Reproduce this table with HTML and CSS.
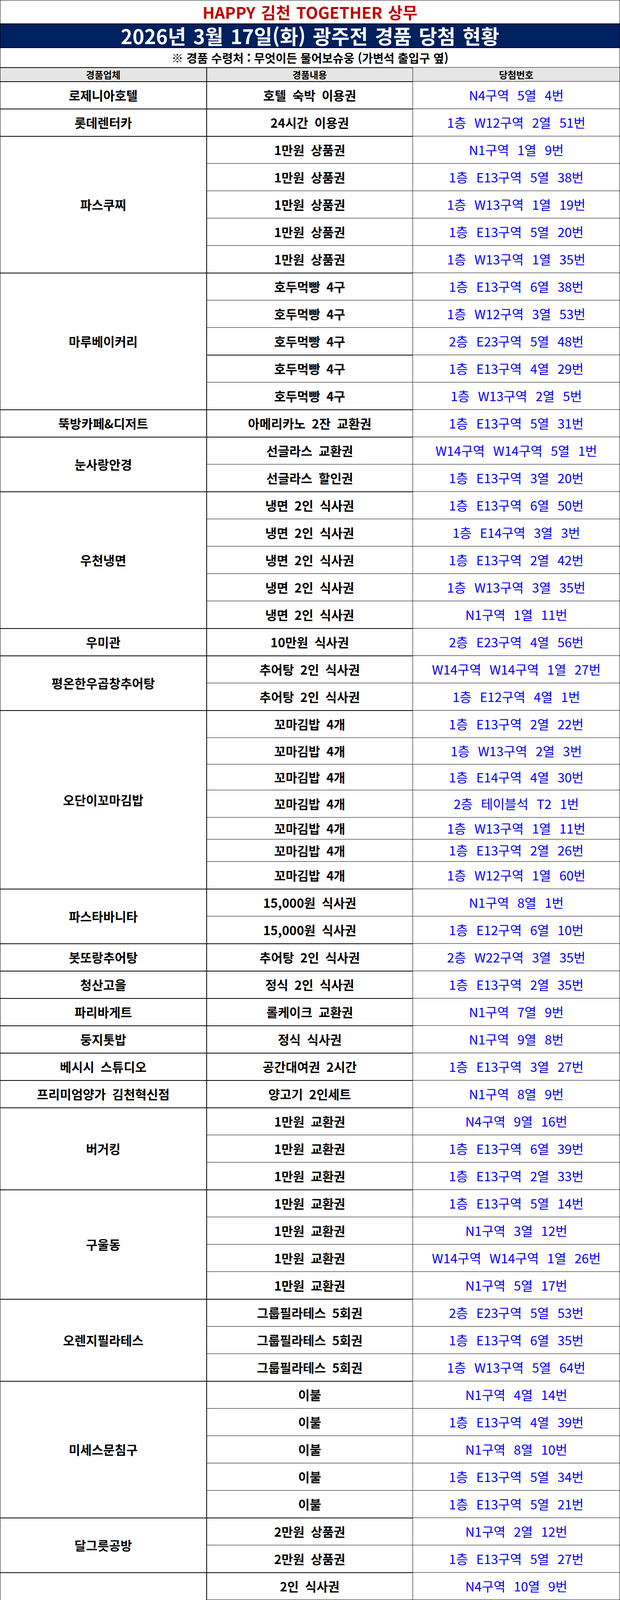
FILE: index.html
```html
<!DOCTYPE html>
<html lang="ko">
<head>
<meta charset="utf-8">
<title>HAPPY 김천 TOGETHER 상무 - 경품 당첨 현황</title>
<link rel="stylesheet" href="styles.css">
</head>
<body>
<table class="sheet">
<colgroup><col class="c1"><col class="c2"><col class="c3"></colgroup>
<tbody>
<tr class="r-title"><td class="t-title" colspan="3">HAPPY 김천 TOGETHER 상무</td></tr>
<tr class="r-band"><td class="t-band" colspan="3">2026년 3월 17일(화) 광주전 경품 당첨 현황</td></tr>
<tr class="r-sub"><td class="t-sub" colspan="3">※ 경품 수령처 : 무엇이든 물어보슈웅 (가변석 출입구 옆)</td></tr>
<tr class="r-head"><th class="h thick">경품업체</th><th class="h thick">경품내용</th><th class="h">당첨번호</th></tr>

<tr class="r"><td class="v">로제니아호텔</td><td class="p gt gb">호텔 숙박 이용권</td><td class="n">N4구역 5열 4번</td></tr>
<tr class="r"><td class="v">롯데렌터카</td><td class="p gt gb">24시간 이용권</td><td class="n">1층 W12구역 2열 51번</td></tr>

<tr class="r"><td class="v" rowspan="5">파스쿠찌</td><td class="p gt">1만원 상품권</td><td class="n">N1구역 1열 9번</td></tr>
<tr class="r"><td class="p">1만원 상품권</td><td class="n">1층 E13구역 5열 38번</td></tr>
<tr class="r"><td class="p">1만원 상품권</td><td class="n">1층 W13구역 1열 19번</td></tr>
<tr class="r"><td class="p">1만원 상품권</td><td class="n">1층 E13구역 5열 20번</td></tr>
<tr class="r"><td class="p gb">1만원 상품권</td><td class="n">1층 W13구역 1열 35번</td></tr>

<tr class="r"><td class="v" rowspan="5">마루베이커리</td><td class="p gt">호두먹빵 4구</td><td class="n">1층 E13구역 6열 38번</td></tr>
<tr class="r"><td class="p">호두먹빵 4구</td><td class="n">1층 W12구역 3열 53번</td></tr>
<tr class="r"><td class="p">호두먹빵 4구</td><td class="n">2층 E23구역 5열 48번</td></tr>
<tr class="r"><td class="p gt">호두먹빵 4구</td><td class="n">1층 E13구역 4열 29번</td></tr>
<tr class="r"><td class="p gb">호두먹빵 4구</td><td class="n">1층 W13구역 2열 5번</td></tr>

<tr class="r"><td class="v">뚝방카페&amp;디저트</td><td class="p gt gb">아메리카노 2잔 교환권</td><td class="n">1층 E13구역 5열 31번</td></tr>

<tr class="r"><td class="v" rowspan="2">눈사랑안경</td><td class="p gt">선글라스 교환권</td><td class="n">W14구역 W14구역 5열 1번</td></tr>
<tr class="r"><td class="p gb">선글라스 할인권</td><td class="n">1층 E13구역 3열 20번</td></tr>

<tr class="r"><td class="v" rowspan="5">우천냉면</td><td class="p gt">냉면 2인 식사권</td><td class="n">1층 E13구역 6열 50번</td></tr>
<tr class="r"><td class="p">냉면 2인 식사권</td><td class="n">1층 E14구역 3열 3번</td></tr>
<tr class="r"><td class="p">냉면 2인 식사권</td><td class="n">1층 E13구역 2열 42번</td></tr>
<tr class="r"><td class="p">냉면 2인 식사권</td><td class="n">1층 W13구역 3열 35번</td></tr>
<tr class="r"><td class="p gb">냉면 2인 식사권</td><td class="n">N1구역 1열 11번</td></tr>

<tr class="r"><td class="v">우미관</td><td class="p gt gb">10만원 식사권</td><td class="n">2층 E23구역 4열 56번</td></tr>

<tr class="r"><td class="v" rowspan="2">평온한우곱창추어탕</td><td class="p gt">추어탕 2인 식사권</td><td class="n">W14구역 W14구역 1열 27번</td></tr>
<tr class="r"><td class="p gb">추어탕 2인 식사권</td><td class="n">1층 E12구역 4열 1번</td></tr>

<tr class="r"><td class="v" rowspan="7">오단이꼬마김밥</td><td class="p gt">꼬마김밥 4개</td><td class="n">1층 E13구역 2열 22번</td></tr>
<tr class="r h68"><td class="p">꼬마김밥 4개</td><td class="n">1층 W13구역 2열 3번</td></tr>
<tr class="r h66"><td class="p">꼬마김밥 4개</td><td class="n">1층 E14구역 4열 30번</td></tr>
<tr class="r"><td class="p">꼬마김밥 4개</td><td class="n">2층 테이블석 T2 1번</td></tr>
<tr class="r h56"><td class="p">꼬마김밥 4개</td><td class="n">1층 W13구역 1열 11번</td></tr>
<tr class="r h57"><td class="p">꼬마김밥 4개</td><td class="n">1층 E13구역 2열 26번</td></tr>
<tr class="r"><td class="p gb">꼬마김밥 4개</td><td class="n">1층 W12구역 1열 60번</td></tr>

<tr class="r"><td class="v" rowspan="2">파스타바니타</td><td class="p gt">15,000원 식사권</td><td class="n">N1구역 8열 1번</td></tr>
<tr class="r"><td class="p gb">15,000원 식사권</td><td class="n">1층 E12구역 6열 10번</td></tr>

<tr class="r"><td class="v">봇또랑추어탕</td><td class="p gt gb">추어탕 2인 식사권</td><td class="n">2층 W22구역 3열 35번</td></tr>
<tr class="r"><td class="v">청산고을</td><td class="p gt gb">정식 2인 식사권</td><td class="n">1층 E13구역 2열 35번</td></tr>
<tr class="r"><td class="v">파리바게트</td><td class="p gt gb">롤케이크 교환권</td><td class="n">N1구역 7열 9번</td></tr>
<tr class="r"><td class="v">둥지톳밥</td><td class="p gt gb">정식 식사권</td><td class="n">N1구역 9열 8번</td></tr>
<tr class="r"><td class="v">베시시 스튜디오</td><td class="p gt gb">공간대여권 2시간</td><td class="n">1층 E13구역 3열 27번</td></tr>
<tr class="r"><td class="v">프리미엄양가 김천혁신점</td><td class="p gt gb">양고기 2인세트</td><td class="n">N1구역 8열 9번</td></tr>

<tr class="r"><td class="v" rowspan="3">버거킹</td><td class="p gt">1만원 교환권</td><td class="n">N4구역 9열 16번</td></tr>
<tr class="r"><td class="p">1만원 교환권</td><td class="n">1층 E13구역 6열 39번</td></tr>
<tr class="r"><td class="p gb">1만원 교환권</td><td class="n">1층 E13구역 2열 33번</td></tr>

<tr class="r"><td class="v" rowspan="4">구울동</td><td class="p gt">1만원 교환권</td><td class="n">1층 E13구역 5열 14번</td></tr>
<tr class="r"><td class="p">1만원 교환권</td><td class="n">N1구역 3열 12번</td></tr>
<tr class="r"><td class="p">1만원 교환권</td><td class="n">W14구역 W14구역 1열 26번</td></tr>
<tr class="r"><td class="p gb">1만원 교환권</td><td class="n">N1구역 5열 17번</td></tr>

<tr class="r"><td class="v" rowspan="3">오렌지필라테스</td><td class="p gt">그룹필라테스 5회권</td><td class="n">2층 E23구역 5열 53번</td></tr>
<tr class="r"><td class="p">그룹필라테스 5회권</td><td class="n">1층 E13구역 6열 35번</td></tr>
<tr class="r"><td class="p gb">그룹필라테스 5회권</td><td class="n">1층 W13구역 5열 64번</td></tr>

<tr class="r"><td class="v" rowspan="5">미세스문침구</td><td class="p gt">이불</td><td class="n">N1구역 4열 14번</td></tr>
<tr class="r"><td class="p">이불</td><td class="n">1층 E13구역 4열 39번</td></tr>
<tr class="r"><td class="p">이불</td><td class="n">N1구역 8열 10번</td></tr>
<tr class="r"><td class="p">이불</td><td class="n">1층 E13구역 5열 34번</td></tr>
<tr class="r"><td class="p gb">이불</td><td class="n">1층 E13구역 5열 21번</td></tr>

<tr class="r"><td class="v" rowspan="2">달그릇공방</td><td class="p gt">2만원 상품권</td><td class="n">N1구역 2열 12번</td></tr>
<tr class="r"><td class="p gb">2만원 상품권</td><td class="n">1층 E13구역 5열 27번</td></tr>

<tr class="r"><td class="v" rowspan="5">단밀</td><td class="p gt">2인 식사권</td><td class="n">N4구역 10열 9번</td></tr>
<tr class="r"><td class="p">2인 식사권</td><td class="n">1층 E13구역 5열 19번</td></tr>
<tr class="r"><td class="p">2인 식사권</td><td class="n">N1구역 5열 9번</td></tr>
<tr class="r"><td class="p">2인 식사권</td><td class="n">1층 W13구역 1열 1번</td></tr>
<tr class="r"><td class="p gb">2인 식사권</td><td class="n">3층 E33구역 1열 39번</td></tr>

<tr class="r"><td class="v" rowspan="5">토끼밀</td><td class="p gt">분식대첩 4종</td><td class="n">N1구역 8열 11번</td></tr>
<tr class="r"><td class="p">분식대첩 4종</td><td class="n">1층 E13구역 2열 23번</td></tr>
<tr class="r"><td class="p">분식대첩 4종</td><td class="n">1층 E14구역 3열 4번</td></tr>
<tr class="r"><td class="p">분식대첩 4종</td><td class="n">1층 E13구역 5열 13번</td></tr>
<tr class="r"><td class="p gb">분식대첩 4종</td><td class="n">1층 E13구역 6열 18번</td></tr>

<tr class="r"><td class="v" rowspan="5">파닭회관 본점 매장식사권</td><td class="p gt gb">치킨 한마리</td><td class="n">N1구역 1열 14번</td></tr>
<tr class="r"><td class="p gt gb">치킨 한마리</td><td class="n">1층 W12구역 2열 50번</td></tr>
<tr class="r"><td class="p gt gb">치킨 한마리</td><td class="n">N1구역 3열 9번</td></tr>
<tr class="r"><td class="p gt gb">치킨 한마리</td><td class="n">1층 E13구역 3열 40번</td></tr>
<tr class="r"><td class="p gt gb open-r">치킨 한마리</td><td class="n open">1층 W12구역 1열 41번</td></tr>

<tr class="r"><td class="v" rowspan="3">세탁예술가</td><td class="p gt gb open-r">부활세제 2L</td><td class="n open">1층 E13구역 2열 41번</td></tr>
<tr class="r"><td class="p gt gb open-r">부활세제 2L</td><td class="n open">1층 E13구역 6열 32번</td></tr>
<tr class="r r-last"><td class="p gt open-r last">부활세제 2L</td><td class="n open">N4구역 10열 10번</td></tr>
</tbody>
</table>
</body>
</html>
```

FILE: styles.css
```css
* {
  box-sizing: border-box;
}

html, body {
  margin: 0;
  padding: 0;
  background: #ffffff;
}

body {
  font-family: "Noto Sans CJK KR", "Noto Sans", "Liberation Sans", sans-serif;
  color: #000000;
}

.sheet {
  border-collapse: collapse;
  table-layout: fixed;
  width: 1586px;
}

.c1 { width: 528px; }
.c2 { width: 528px; }
.c3 { width: 530px; }

.sheet td,
.sheet th {
  padding: 0;
  text-align: center;
  vertical-align: middle;
  line-height: 1.15;
  white-space: nowrap;
}

/* row heights */
.r-title { height: 60px; }
.r-band  { height: 61px; }
.r-sub   { height: 51px; }
.r-head  { height: 36px; }
.r       { height: 70px; }
.r.h68   { height: 68px; }
.r.h66   { height: 66px; }
.r.h57   { height: 57px; }
.r.h56   { height: 56px; }
.r.r-last { height: 69px; }

/* banner rows */
.t-title {
  border: 1px solid #000;
  border-bottom: 2px solid #000;
  color: #c00000;
  font-size: 41px;
  font-weight: 700;
  word-spacing: 3px;
}

.t-band {
  border-top: 2px solid #000;
  border-bottom: 2px solid #000;
  border-left: 1px solid #000;
  border-right: 1px solid #000;
  background: #002060;
  color: #ffffff;
  font-size: 51px;
  font-weight: 700;
  word-spacing: 4px;
}

.t-sub {
  border-left: 1px solid #000;
  border-right: 1px solid #000;
  border-top: 2px solid #000;
  border-bottom: none;
  font-size: 30px;
  font-weight: 700;
}

/* header row */
.h {
  background: #e6e6e6;
  border: 1px solid #000;
  font-size: 24px;
  font-weight: 700;
}

.h.thick {
  border-top: 2px solid #000;
  border-bottom: 2px solid #000;
}

.h:first-child {
  border-left: 1px solid #000;
  border-right: 2px solid #000;
}

/* body cells */
.v {
  border: 2px solid #000;
  border-left: 1px solid #000;
  font-size: 32px;
  font-weight: 700;
  word-spacing: 7px;
}

.p {
  border: 1px solid #000;
  border-left: 2px solid #000;
  font-size: 32px;
  font-weight: 700;
  word-spacing: 7px;
}

.p.gt { border-top: 2px solid #000; }
.p.gb { border-bottom: 2px solid #000; }
.p.open-r { border-right: none; }
.p.last { border-bottom: 1px solid #000; }

.n {
  border: 1px solid #000;
  color: #0000ff;
  font-size: 33px;
  font-weight: 400;
  word-spacing: 12px;
}

.n.open {
  border: none;
}
```
